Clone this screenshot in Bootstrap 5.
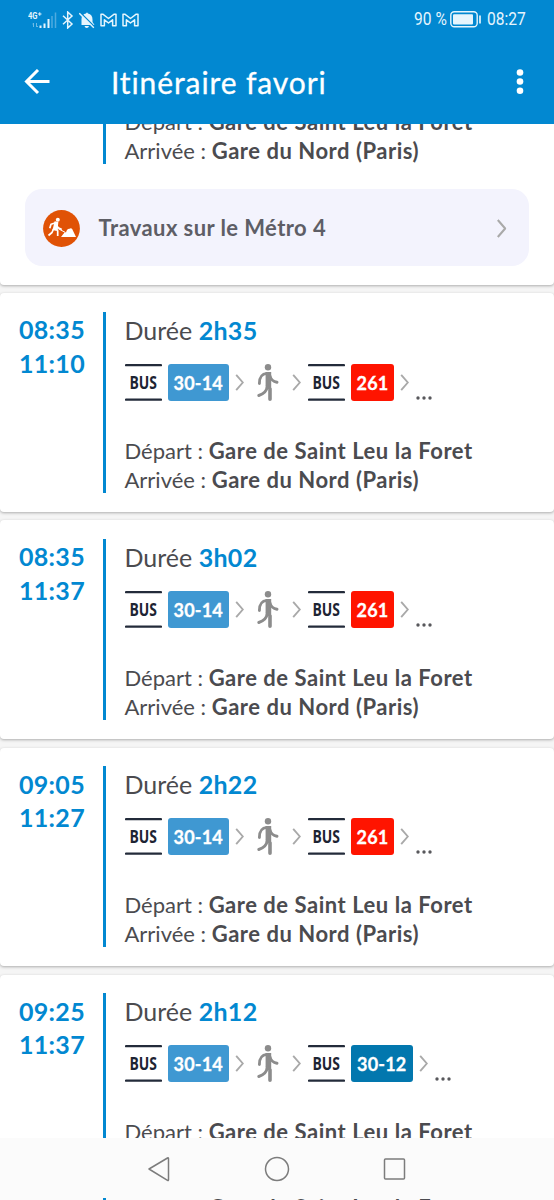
<!DOCTYPE html>
<html lang="fr">
<head>
<meta charset="utf-8">
<meta name="viewport" content="width=device-width, initial-scale=1">
<title>Itinéraire favori</title>
<link href="https://cdn.jsdelivr.net/npm/bootstrap@5.3.0/dist/css/bootstrap.min.css" rel="stylesheet">
<style>
  body { font-family: Lato, "Noto Sans", sans-serif; color: #4b4b4f; background: #f5f5f5; height: 1200px; overflow: hidden; }
  svg { display: block; flex: none; }
  .app-head { background: #0288d1; color: #fff; height: 124px; }
  .status { height: 39px; padding: 0 29px 0 28px; font-family: Roboto, sans-serif; font-size: 17.5px; color: #e6f5fd; }
  .status-text { transform: scaleX(.89); white-space: pre; }
  .title-row { height: 85px; padding: 0 28px 0 24px; }
  .page-title { font-size: 30px; line-height: 36px; margin-left: 61px; padding-top: 1px; letter-spacing: .9px; -webkit-text-stroke: .3px #fff; }
  .feed { height: 1014px; overflow: hidden; }
  .trip { border: 0; border-radius: 4px; height: 218.5px; margin-bottom: 8.7px; padding-top: 18.5px; box-shadow: 0 1px 3px rgba(0,0,0,.3); flex: none; }
  .trip-cut { height: 160.5px; padding: 0 0 18.5px; justify-content: flex-end; overflow: hidden; border-radius: 0 0 4px 4px; }
  .hours { width: 103px; padding: 1.5px 0 0 19px; font-weight: 700; font-size: 25px; line-height: 33.4px; color: #0288d1; letter-spacing: .3px; }
  .detail { height: 181px; border-left: 3px solid #0288d1; padding-left: 18.5px; }
  .detail-cut { height: 58px; margin-left: 103px; padding-top: 2px; flex: none; }
  .duration { font-size: 25px; line-height: 36px; height: 52px; }
  .duration b { color: #0288d1; font-weight: 700; letter-spacing: .3px; }
  .legs { height: 37px; }
  .line-no { height: 37px; border-radius: 3px; color: #fff; font-weight: 700; font-size: 18px; line-height: 39px; text-align: center; margin: 0 6px 0 6px; letter-spacing: .2px; -webkit-text-stroke: .3px #fff; }
  .l14 { width: 61.5px; background: #3f98d2; }
  .l12 { width: 61.5px; background: #0277ae; }
  .l261 { width: 43px; background: #ff1400; }
  .ends { font-size: 22px; line-height: 29.3px; white-space: nowrap; }
  .ends b { font-weight: 700; letter-spacing: .53px; }
  .works { height: 77px; margin: 25px 25px 0; border-radius: 17px; background: #f3f3fd; padding: 2px 22px 0 18px; font-weight: 700; font-size: 22px; color: #5e5e66; flex: none; letter-spacing: .42px; }
  .works-label { margin: -3px 0 0 18.5px; }
  .android-nav { height: 62px; background: #fbfbfb; }
  .nav-keys { height: 60px; }
  .peek { height: 2px; overflow: hidden; }
  .peek .detail { margin-left: 103px; height: 30px; }
  .peek .ends { line-height: 20px; }
</style>
</head>
<body>
<svg class="d-none">
  <symbol id="chev" viewBox="0 0 9 18"><path d="M1 1l7 8-7 8" fill="none" stroke="#a9a9a9" stroke-width="2"/></symbol>
  <symbol id="bus" viewBox="0 0 37 37">
    <path d="M1 1.2h35M1 35.6h35" stroke="#232b3a" stroke-width="2.2" stroke-linecap="round"/>
    <text x="4.500" y="25.200" textLength="27.500" lengthAdjust="spacingAndGlyphs" font-family="Open Sans" font-weight="700" font-size="18.300" fill="#1d2433">BUS</text>
  </symbol>
  <symbol id="walk" viewBox="0 0 22 37">
    <circle cx="11" cy="3.2" r="3.2" fill="#8c8c8c"/>
    <path d="M8.600 8h5.600v15.500l.6 1V35.200a1.800 1.800 0 0 1-3.600 0V25L8.600 22z" fill="#8c8c8c"/>
    <path d="M10 9.400C4.500 10 2.400 13 2.400 19.500M13 12c1 4 3.500 5.600 7 6.200M10.200 22c-.3 5.500-3.700 8-8.400 9.500" fill="none" stroke="#8c8c8c" stroke-width="2.900" stroke-linecap="round" stroke-linejoin="round"/>
  </symbol>
  <symbol id="dots" viewBox="0 0 16 4"><g fill="#58585c"><circle cx="2" cy="2" r="1.7"/><circle cx="8" cy="2" r="1.7"/><circle cx="14" cy="2" r="1.7"/></g></symbol>
  <symbol id="gm" viewBox="0 0 17 14"><path d="M1 12.800V1.200h1.800L8.500 5.500l5.700-4.300H16v11.600h-3.400V6.800L8.500 10 4.400 6.800v6z" fill="none" stroke="#e6f5fd" stroke-width="1.500" stroke-linejoin="round"/></symbol>
</svg>

<header class="app-head">
  <div class="status d-flex align-items-center">
    <svg width="29" height="18" viewBox="0 0 29 18">
      <text x="0" y="7.500" font-family="Roboto" font-weight="700" font-size="8.500" textLength="9.500" lengthAdjust="spacingAndGlyphs" fill="#e6f5fd">4G</text>
      <path d="M10 3h3.500M11.750 1.250v3.500" stroke="#e6f5fd"/>
      <path d="M5.500 12v4M8.500 12v4M4.500 13h1M8.500 15.500h1.500" stroke="#6fbbe5"/>
      <path d="M12.500 17v-2.500M16.500 17v-4.500M20.500 17v-9" stroke="#e6f5fd" stroke-width="2"/>
      <path d="M24 17V5M27.500 17V1.500" stroke="#4fabdf" stroke-width="1.500"/>
    </svg>
    <svg width="12" height="18" viewBox="0 0 12 18" style="margin-left:5px"><path d="M1 4.700l9 8.300-4.300 4V1L10 5 1 13.300" fill="none" stroke="#e6f5fd" stroke-width="1.500"/></svg>
    <svg width="16" height="18" viewBox="0 0 16 18" style="margin-left:5px"><path d="M2.500 14V8C2.500 4.500 4.500 3 7 2.500q1-2 2 0c3 .5 4.500 3 4.500 6V11l2 3zM5.500 15h4.500q-.5 2-2.250 2t-2.250-2z" fill="#e6f5fd"/><path d="M1 1.200l15 15" stroke="#0288d1" stroke-width="1.500"/><path d="M.3 2.200l14.500 14.500" stroke="#e6f5fd" stroke-width="1.400"/></svg>
    <svg width="17" height="14" style="margin-left:5px"><use href="#gm"/></svg>
    <svg width="17" height="14" style="margin-left:4.500px"><use href="#gm"/></svg>
    <span class="status-text ms-auto" style="transform-origin:right">90 %</span>
    <svg width="32" height="17" viewBox="0 0 32 17" style="margin:0 5px 0 3px"><rect x=".8" y=".8" width="26.400" height="15" rx="3.500" fill="none" stroke="#e6f5fd" stroke-width="1.400"/><rect x="3" y="3.200" width="20" height="10.400" rx="1" fill="#e6f5fd"/><path d="M30 4.500v8" stroke="#e6f5fd" stroke-width="1.700"/></svg>
    <span class="status-text" style="transform-origin:left;width:38px">08:27</span>
  </div>
  <div class="title-row d-flex align-items-center">
    <svg width="26" height="26" viewBox="0 0 26 26" fill="none" stroke="#fff" stroke-width="3"><path d="M25.500 12.500H3M14 1L2.500 12.500 14 24"/></svg>
    <div class="page-title">Itinéraire favori</div>
    <svg class="ms-auto" width="12" height="28" viewBox="0 0 12 28" fill="#fff"><circle cx="6" cy="4.500" r="3.300"/><circle cx="6" cy="13.500" r="3.300"/><circle cx="6" cy="22.800" r="3.300"/></svg>
  </div>
</header>

<main class="feed d-flex flex-column">
  <article class="card trip trip-cut">
    <div class="detail detail-cut d-flex flex-column justify-content-start">
      <div class="ends" style="margin-top:-1px">Départ : <b>Gare de Saint Leu la Foret</b></div>
      <div class="ends">Arrivée : <b>Gare du Nord (Paris)</b></div>
    </div>
    <div class="works d-flex align-items-center">
      <svg width="37" height="37" viewBox="0 0 37 37"><circle cx="18.500" cy="18.500" r="18.400" fill="#e05206"/><circle cx="14.800" cy="9.800" r="2" fill="#fff"/><path d="M11.500 12.200l3 .3-.8 6.300 1 2V26M10.500 19L9 22.500l-3.500 3M12 13L8 14.200l-1.200 4M13.800 14l1 3.500 4 2" fill="none" stroke="#fff" stroke-width="1.700" stroke-linejoin="round"/><path d="M11.500 12l3.200.5-.9 8.500-4.300-1zM18 27l3.500-4.500h1.500q.8-4 3.500-3.800 2.500-1.200 3.500 2L33 27z" fill="#fff"/><path d="M13 17.500l9.500 5" stroke="#fff"/></svg>
      <span class="works-label">Travaux sur le Métro 4</span>
      <svg class="ms-auto" width="11" height="19" viewBox="0 0 9 18"><use href="#chev"/></svg>
    </div>
  </article>

  <article class="card trip flex-row">
    <div class="hours">08:35<br>11:10</div>
    <div class="detail">
      <div class="duration">Durée <b>2h35</b></div>
      <div class="legs d-flex align-items-center">
        <svg width="37" height="37"><use href="#bus"/></svg><span class="line-no l14">30-14</span>
        <svg width="9" height="17"><use href="#chev"/></svg>
        <svg width="22" height="37" style="margin:0 13px"><use href="#walk"/></svg>
        <svg width="9" height="17"><use href="#chev"/></svg>
        <svg width="37" height="37" style="margin-left:7px"><use href="#bus"/></svg><span class="line-no l261">261</span>
        <svg width="9" height="17"><use href="#chev"/></svg>
        <svg class="align-self-end" width="16" height="4" style="margin:0 0 1px 7px"><use href="#dots"/></svg>
      </div>
      <div class="ends" style="margin-top:35px">Départ : <b>Gare de Saint Leu la Foret</b></div>
      <div class="ends">Arrivée : <b>Gare du Nord (Paris)</b></div>
    </div>
  </article>

  <article class="card trip flex-row">
    <div class="hours">08:35<br>11:37</div>
    <div class="detail">
      <div class="duration">Durée <b>3h02</b></div>
      <div class="legs d-flex align-items-center">
        <svg width="37" height="37"><use href="#bus"/></svg><span class="line-no l14">30-14</span>
        <svg width="9" height="17"><use href="#chev"/></svg>
        <svg width="22" height="37" style="margin:0 13px"><use href="#walk"/></svg>
        <svg width="9" height="17"><use href="#chev"/></svg>
        <svg width="37" height="37" style="margin-left:7px"><use href="#bus"/></svg><span class="line-no l261">261</span>
        <svg width="9" height="17"><use href="#chev"/></svg>
        <svg class="align-self-end" width="16" height="4" style="margin:0 0 1px 7px"><use href="#dots"/></svg>
      </div>
      <div class="ends" style="margin-top:35px">Départ : <b>Gare de Saint Leu la Foret</b></div>
      <div class="ends">Arrivée : <b>Gare du Nord (Paris)</b></div>
    </div>
  </article>

  <article class="card trip flex-row">
    <div class="hours">09:05<br>11:27</div>
    <div class="detail">
      <div class="duration">Durée <b>2h22</b></div>
      <div class="legs d-flex align-items-center">
        <svg width="37" height="37"><use href="#bus"/></svg><span class="line-no l14">30-14</span>
        <svg width="9" height="17"><use href="#chev"/></svg>
        <svg width="22" height="37" style="margin:0 13px"><use href="#walk"/></svg>
        <svg width="9" height="17"><use href="#chev"/></svg>
        <svg width="37" height="37" style="margin-left:7px"><use href="#bus"/></svg><span class="line-no l261">261</span>
        <svg width="9" height="17"><use href="#chev"/></svg>
        <svg class="align-self-end" width="16" height="4" style="margin:0 0 1px 7px"><use href="#dots"/></svg>
      </div>
      <div class="ends" style="margin-top:35px">Départ : <b>Gare de Saint Leu la Foret</b></div>
      <div class="ends">Arrivée : <b>Gare du Nord (Paris)</b></div>
    </div>
  </article>

  <article class="card trip flex-row">
    <div class="hours">09:25<br>11:37</div>
    <div class="detail">
      <div class="duration">Durée <b>2h12</b></div>
      <div class="legs d-flex align-items-center">
        <svg width="37" height="37"><use href="#bus"/></svg><span class="line-no l14">30-14</span>
        <svg width="9" height="17"><use href="#chev"/></svg>
        <svg width="22" height="37" style="margin:0 13px"><use href="#walk"/></svg>
        <svg width="9" height="17"><use href="#chev"/></svg>
        <svg width="37" height="37" style="margin-left:7px"><use href="#bus"/></svg><span class="line-no l12">30-12</span>
        <svg width="9" height="17"><use href="#chev"/></svg>
        <svg class="align-self-end" width="16" height="4" style="margin:0 0 1px 7px"><use href="#dots"/></svg>
      </div>
      <div class="ends" style="margin-top:35px">Départ : <b>Gare de Saint Leu la Foret</b></div>
    </div>
  </article>
</main>

<footer class="android-nav">
  <div class="nav-keys d-flex align-items-center justify-content-center">
    <svg width="260" height="28" viewBox="0 0 260 28" fill="none" stroke="#7c7c7c" stroke-width="1.500" stroke-linejoin="round"><path d="M2 15L20.500 4q1-.5 1 .8v21q0 1.200-1 .6z"/><circle cx="130" cy="15" r="11.500"/><rect x="237.500" y="5" width="20" height="20" rx="1"/></svg>
  </div>
  <div class="peek"><div class="detail"><div class="ends">Départ : <b>Gare de Saint Leu la Foret</b></div></div></div>
</footer>
<script src="https://cdn.jsdelivr.net/npm/bootstrap@5.3.0/dist/js/bootstrap.bundle.min.js"></script>
</body>
</html>
